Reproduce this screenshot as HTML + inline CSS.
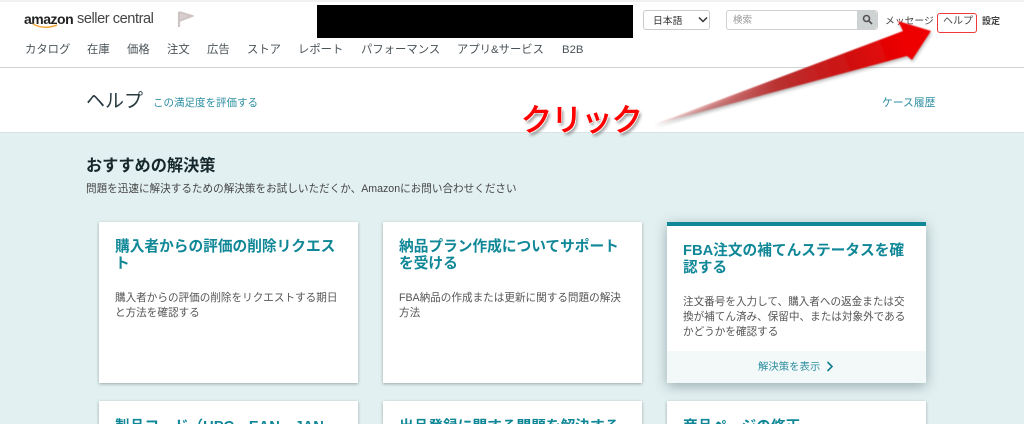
<!DOCTYPE html>
<html lang="ja"><head><meta charset="utf-8"><title>ヘルプ</title>
<style>
html,body{margin:0;padding:0;width:1024px;height:424px;overflow:hidden}
#w{position:relative;width:1024px;height:424px;overflow:hidden;background:#e3f0f1;font-family:"Liberation Sans","Noto Sans CJK JP",sans-serif;color:#333}
.t{position:absolute;white-space:nowrap;line-height:1}
.hdr{position:absolute;left:0;top:0;width:1024px;height:133px;background:#fff;border-bottom:1px solid #d8e3e4;box-sizing:border-box}
.card{position:absolute;background:#fff;width:259px;box-shadow:0 1px 3px rgba(60,80,85,.45)}
.h{position:absolute;left:16px;top:17px;white-space:nowrap;font-size:14.7px;line-height:17px;font-weight:700;color:#0f8797}
.p{position:absolute;left:16px;top:69px;white-space:nowrap;font-size:10.6px;line-height:15px;color:#555}
.nav{font-size:11.35px;color:#4a5358;top:45px}
.b{height:23px;overflow:hidden}
</style></head><body><div id="w">
<div class="hdr"></div>
<div style="position:absolute;left:0;top:0;width:1024px;height:2px;background:#f1f1f1"></div>
<div style="position:absolute;left:0;top:67px;width:1024px;height:1px;background:#cfd2d3"></div>

<div class="t" style="left:24px;top:12px;font-size:14px;font-weight:700;color:#222;letter-spacing:-.5px">amazon</div>
<div class="t" style="left:77px;top:12px;font-size:14.6px;color:#444;letter-spacing:-.45px">seller central</div>
<svg style="position:absolute;left:30px;top:22px" width="32" height="10"><path d="M3 2Q14 8 27 3" fill="none" stroke="#f3a838" stroke-width="1.5"/></svg>
<svg style="position:absolute;left:176px;top:10px" width="18" height="18"><path d="M3 2V17M3 2L16 6L3 11" fill="#d8cfcf" stroke="#cfc4c4" stroke-width="2.2"/></svg>

<div class="t nav" style="left:25px">カタログ</div>
<div class="t nav" style="left:87px">在庫</div>
<div class="t nav" style="left:127px">価格</div>
<div class="t nav" style="left:167px">注文</div>
<div class="t nav" style="left:207px">広告</div>
<div class="t nav" style="left:247px">ストア</div>
<div class="t nav" style="left:298px">レポート</div>
<div class="t nav" style="left:361px">パフォーマンス</div>
<div class="t nav" style="left:457px">アプリ&amp;サービス</div>
<div class="t nav" style="left:562px">B2B</div>

<div style="position:absolute;left:317px;top:5px;width:316px;height:33px;background:#000"></div>

<div style="position:absolute;left:643px;top:10px;width:65px;height:18px;border:1px solid #c9cccc;border-radius:3px;background:#fff"></div>
<div class="t" style="left:653px;top:17px;font-size:9.8px;color:#333">日本語</div>
<svg style="position:absolute;left:698px;top:16px" width="10" height="8"><path d="M1 1.5L5 5.5L9 1.5" fill="none" stroke="#333" stroke-width="1.5"/></svg>

<div style="position:absolute;left:726px;top:10px;width:150px;height:18px;border:1px solid #cfd2d2;border-radius:3px;background:#fff"></div>
<div style="position:absolute;left:857px;top:11px;width:20px;height:18px;background:#cfd2d2;border-radius:0 3px 3px 0"></div>
<svg style="position:absolute;left:862px;top:14px" width="11" height="11"><circle cx="4.5" cy="4.5" r="3" fill="none" stroke="#555" stroke-width="1.6"/><path d="M7 7L10 10" stroke="#555" stroke-width="1.8"/></svg>
<div class="t" style="left:733px;top:16px;font-size:9.5px;color:#999">検索</div>

<div class="t" style="left:885px;top:17px;font-size:9.8px;color:#444">メッセージ</div>
<div class="t" style="left:943px;top:17px;font-size:10px;color:#444">ヘルプ</div>
<div class="t" style="left:982px;top:17px;font-size:9px;color:#444;font-weight:700">設定</div>
<div style="position:absolute;left:937px;top:13px;width:38px;height:18px;border:1.5px solid #ee3a3a;border-radius:3px"></div>

<div class="t" style="left:86px;top:92px;font-size:19px;color:#283a40">ヘルプ</div>
<div class="t" style="left:153px;top:98px;font-size:10.5px;color:#2c8ea0">この満足度を評価する</div>
<div class="t" style="left:882px;top:98px;font-size:10.8px;color:#2c8ea0">ケース履歴</div>

<div class="t" style="left:86px;top:158px;font-size:16.2px;font-weight:700;color:#16282c">おすすめの解決策</div>
<div class="t" style="left:86px;top:184px;font-size:10.6px;color:#444">問題を迅速に解決するための解決策をお試しいただくか、Amazonにお問い合わせください</div>

<div class="card" style="left:99px;top:222px;height:161px"><div class="h">購入者からの評価の削除リクエス<br>ト</div><div class="p">購入者からの評価の削除をリクエストする期日<br>と方法を確認する</div></div>
<div class="card" style="left:383px;top:222px;height:161px"><div class="h">納品プラン作成についてサポート<br>を受ける</div><div class="p">FBA納品の作成または更新に関する問題の解決<br>方法</div></div>
<div class="card" style="left:667px;top:222px;height:161px;box-shadow:0 3px 12px rgba(60,90,95,.45)">
<div style="position:absolute;left:0;top:0;width:259px;height:4px;background:#0f8797"></div>
<div class="h" style="top:21px">FBA注文の補てんステータスを確<br>認する</div>
<div class="p" style="top:73px">注文番号を入力して、購入者への返金または交<br>換が補てん済み、保留中、または対象外である<br>かどうかを確認する</div>
<div style="position:absolute;left:0;bottom:0;width:259px;height:32px;background:#f3f8f9"></div>
<div class="t" style="left:91px;top:141px;font-size:10.4px;color:#2c8ea0">解決策を表示</div>
<svg style="position:absolute;left:159px;top:139px" width="8" height="11"><path d="M1.5 1L6 5.5L1.5 10" fill="none" stroke="#137f90" stroke-width="1.6"/></svg>
</div>
<div class="card b" style="left:99px;top:401px"><div class="h" style="top:18px">製品コード（UPC、EAN、JAN</div></div>
<div class="card b" style="left:383px;top:401px"><div class="h" style="top:18px">出品登録に関する問題を解決する</div></div>
<div class="card b" style="left:667px;top:401px"><div class="h" style="top:18px">商品ページの修正</div></div>

<svg style="position:absolute;left:0;top:0" width="1024" height="424">
<defs><linearGradient id="g" gradientUnits="userSpaceOnUse" x1="653" y1="125" x2="905" y2="40"><stop offset="0" stop-color="#d04040" stop-opacity=".1"/><stop offset=".5" stop-color="#b93030"/><stop offset=".78" stop-color="#d01010"/><stop offset="1" stop-color="#ee0000"/></linearGradient>
<filter id="s" x="-10%" y="-20%" width="120%" height="140%"><feGaussianBlur stdDeviation="1.5"/></filter>
<filter id="b" x="-5%" y="-10%" width="110%" height="120%"><feGaussianBlur stdDeviation=".5"/></filter></defs>
<polygon points="653,125 903,31 898,21 931,31 912,60 907,56" fill="#444" opacity=".35" filter="url(#s)" transform="translate(1,2)"/>
<polygon points="653,125 903,31 898,21 931,31 912,60 907,56" fill="url(#g)" filter="url(#b)"/>
</svg>

<div class="t" style="left:521px;top:105px;font-size:31px;font-weight:400;color:#f00;letter-spacing:-.75px;-webkit-text-stroke:1px #f00;text-shadow:1px 1px 0 #fff,-1px -1px 0 #fff,1px -1px 0 #fff,-1px 1px 0 #fff,2px 3px 3px #777">クリック</div>
</div></body></html>
